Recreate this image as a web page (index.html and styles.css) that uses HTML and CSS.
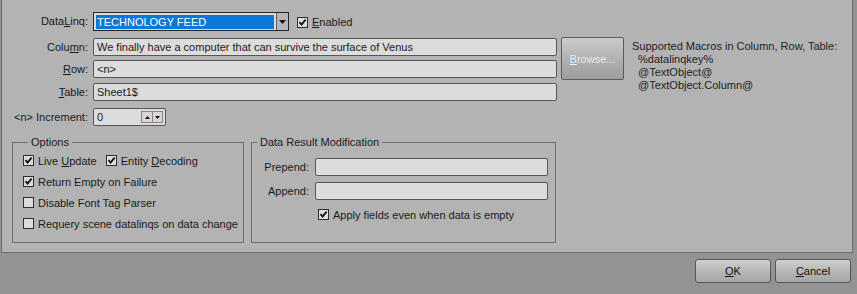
FILE: index.html
```html
<!DOCTYPE html>
<html>
<head>
<meta charset="utf-8">
<link rel="stylesheet" href="styles.css">
</head>
<body>
<div class="panel">
  <div class="top-grid">
    <label class="lbl r1">Data<u>L</u>inq:</label>
    <div class="r1 c2 combo-row">
      <div class="combo">
        <div class="combo-sel">TECHNOLOGY FEED</div>
        <div class="combo-dd"><svg width="7" height="4" viewBox="0 0 7 4"><path d="M0 0H7L3.5 4Z" fill="#111"/></svg></div>
      </div>
      <span class="chk checked"><svg width="9" height="9" viewBox="0 0 9 9"><path d="M1.5 4.2 3.6 6.6 7.6 1.6" fill="none" stroke="#111" stroke-width="1.8"/></svg></span>
      <span class="chk-text"><u>E</u>nabled</span>
    </div>

    <label class="lbl r2">Colu<u>m</u>n:</label>
    <div class="r2 c2 field">We finally have a computer that can survive the surface of Venus</div>
    <div class="browse"><span><u>B</u>rowse...</span></div>
    <div class="macros">Supported Macros in Column, Row, Table:<br><span class="ind">%datalinqkey%</span><br><span class="ind">@TextObject@</span><br><span class="ind">@TextObject.Column@</span></div>

    <label class="lbl r3"><u>R</u>ow:</label>
    <div class="r3 c2 field">&lt;n&gt;</div>

    <label class="lbl r4"><u>T</u>able:</label>
    <div class="r4 c2 field">Sheet1$</div>

    <label class="lbl r5">&lt;n&gt; Increment:</label>
    <div class="r5 c2 spin">
      <span class="spin-val">0</span>
      <span class="spin-btns">
        <span class="spin-b"><svg width="5" height="3" viewBox="0 0 5 3"><path d="M0 3H5L2.5 0Z" fill="#111"/></svg></span>
        <span class="spin-b"><svg width="5" height="3" viewBox="0 0 5 3"><path d="M0 0H5L2.5 3Z" fill="#111"/></svg></span>
      </span>
    </div>
  </div>

  <div class="groups">
    <fieldset class="group options">
      <legend>Options</legend>
      <div class="opt-row">
        <span class="chk checked"><svg width="9" height="9" viewBox="0 0 9 9"><path d="M1.5 4.2 3.6 6.6 7.6 1.6" fill="none" stroke="#111" stroke-width="1.8"/></svg></span>
        <span class="chk-text">Live <u>U</u>pdate</span>
        <span class="chk checked second"><svg width="9" height="9" viewBox="0 0 9 9"><path d="M1.5 4.2 3.6 6.6 7.6 1.6" fill="none" stroke="#111" stroke-width="1.8"/></svg></span>
        <span class="chk-text">Entity <u>D</u>ecoding</span>
      </div>
      <div class="opt-row">
        <span class="chk checked"><svg width="9" height="9" viewBox="0 0 9 9"><path d="M1.5 4.2 3.6 6.6 7.6 1.6" fill="none" stroke="#111" stroke-width="1.8"/></svg></span>
        <span class="chk-text">Return Empty on Failure</span>
      </div>
      <div class="opt-row">
        <span class="chk"></span>
        <span class="chk-text">Disable Font Tag Parser</span>
      </div>
      <div class="opt-row">
        <span class="chk"></span>
        <span class="chk-text">Requery scene datalinqs on data change</span>
      </div>
    </fieldset>

    <fieldset class="group result">
      <legend>Data Result Modification</legend>
      <div class="result-grid">
        <label class="rlbl">Prepend:</label>
        <div class="field rfield"></div>
        <label class="rlbl">Append:</label>
        <div class="field rfield"></div>
        <div class="apply">
          <span class="chk checked"><svg width="9" height="9" viewBox="0 0 9 9"><path d="M1.5 4.2 3.6 6.6 7.6 1.6" fill="none" stroke="#111" stroke-width="1.8"/></svg></span>
          <span class="chk-text">Apply fields even when data is empty</span>
        </div>
      </div>
    </fieldset>
  </div>
</div>

<div class="footer">
  <div class="btn"><u>O</u>K</div>
  <div class="btn"><u>C</u>ancel</div>
</div>
</body>
</html>
```
FILE: styles.css
```css
* { box-sizing: border-box; }
html, body {
  margin: 0;
  padding: 0;
}
body {
  width: 857px;
  height: 294px;
  overflow: hidden;
  background: #939393;
  font-family: "Liberation Sans", Arial, sans-serif;
  font-size: 11px;
  color: #1a1a1a;
}
u { text-decoration: underline; text-underline-offset: 1px; }

.panel {
  margin-left: 1px;
  width: 852px;
  height: 253px;
  background: #b3b3b3;
  border: 1px solid #6e6e6e;
  border-top: none;
  padding-top: 12px;
}

.top-grid {
  display: grid;
  grid-template-columns: 91px 468px 71px 1fr;
  grid-template-rows: 26px 22px 23px 25px 18px;
}
.r1 { grid-row: 1; }
.r2 { grid-row: 2; }
.r3 { grid-row: 3; }
.r4 { grid-row: 4; }
.r5 { grid-row: 5; }
.c2 { grid-column: 2; }

.lbl {
  grid-column: 1;
  text-align: right;
  padding-right: 5px;
  line-height: 18px;
  height: 18px;
  white-space: nowrap;
}
.lbl.r1 { line-height: 19px; }

.combo-row {
  display: flex;
  align-items: center;
  height: 19px;
}
.combo {
  display: flex;
  width: 196px;
  height: 19px;
  border: 1px solid #262626;
  background: #dcdcdc;
}
.combo-sel {
  flex: 1;
  margin: 2px 2px 1px 2px;
  background: #0a78d7;
  color: #fff;
  line-height: 14px;
  padding-left: 1px;
  white-space: nowrap;
}
.combo-dd {
  width: 12px;
  border-left: 1px solid #5a5a5a;
  background: #b6b6b6;
  display: flex;
  align-items: center;
  justify-content: center;
}
.combo-dd svg { display: block; }

.chk {
  display: inline-flex;
  align-items: center;
  justify-content: center;
  width: 11px;
  height: 11px;
  border: 1px solid #2e2e2e;
  background: #dcdcdc;
  flex: none;
}
.chk svg { display: block; }
.combo-row .chk { margin-left: 8px; margin-top: 2px; }
.chk-text {
  margin-left: 4px;
  white-space: nowrap;
}
.combo-row .chk-text { margin-left: 4px; margin-top: 1px; }

.field {
  height: 18px;
  width: 464px;
  background: #dcdcdc;
  border: 1px solid #575757;
  border-radius: 2px;
  padding-left: 3px;
  line-height: 16px;
  white-space: nowrap;
  overflow: hidden;
}

.browse {
  grid-column: 3;
  grid-row: 2 / 4;
  margin-top: -1px;
  width: 63px;
  height: 43px;
  border: 1px solid #5c5c5c;
  border-radius: 2px;
  background: linear-gradient(#cbcbcb, #b0b0b0 55%, #9d9d9d);
  display: flex;
  align-items: center;
  justify-content: center;
  color: #f2f2f2;
  text-shadow: 0 0 1px rgba(120,120,120,0.4);
}

.macros {
  grid-column: 4;
  grid-row: 2 / 6;
  margin-top: 2px;
  line-height: 13px;
  color: #222;
  white-space: nowrap;
}
.macros .ind { padding-left: 6px; }

.spin {
  width: 73px;
  height: 18px;
  background: #dcdcdc;
  border: 1px solid #575757;
  border-radius: 2px;
  display: flex;
  align-items: center;
  justify-content: space-between;
  padding: 0 2px 0 3px;
}
.spin-val { line-height: 16px; }
.spin-btns {
  display: flex;
  height: 12px;
  border: 1px solid #8f8474;
}
.spin-b {
  width: 10px;
  display: flex;
  align-items: center;
  justify-content: center;
  background: #d6d6d6;
}
.spin-b + .spin-b { border-left: 1px solid #8f8474; }

.groups {
  display: flex;
  gap: 7px;
  margin-left: 10px;
  margin-top: 10px;
}
.group {
  margin: 0;
  padding: 0;
  border: 1px solid #6f6f6f;
  height: 107px;
  min-width: 0;
}
.group legend {
  padding: 0 3px;
  margin-left: 5px;
  line-height: 13px;
  font-size: 11px;
  color: #1a1a1a;
}
.options {
  width: 232px;
  padding: 1px 0 0 10px;
}
.opt-row {
  display: flex;
  align-items: center;
  height: 21px;
}
.opt-row .chk.second { margin-left: 9px; }

.result {
  width: 305px;
}
.result-grid {
  display: grid;
  grid-template-columns: 63px 233px;
  grid-auto-rows: 18px;
  row-gap: 6px;
  padding-top: 9px;
}
.rlbl {
  text-align: right;
  padding-right: 6px;
  line-height: 18px;
}
.rfield { width: 233px; }
.apply {
  grid-column: 2;
  display: flex;
  align-items: center;
  margin-left: 3px;
  margin-top: -1px;
}

.footer {
  display: flex;
  justify-content: flex-end;
  gap: 4px;
  padding: 6px 6px 0 0;
}
.btn {
  width: 76px;
  height: 24px;
  border: 1px solid #565656;
  border-radius: 3px;
  background: linear-gradient(#cfcfcf, #b3b3b3 60%, #a7a7a7);
  display: flex;
  align-items: center;
  justify-content: center;
  font-size: 11px;
  color: #111;
}
```
